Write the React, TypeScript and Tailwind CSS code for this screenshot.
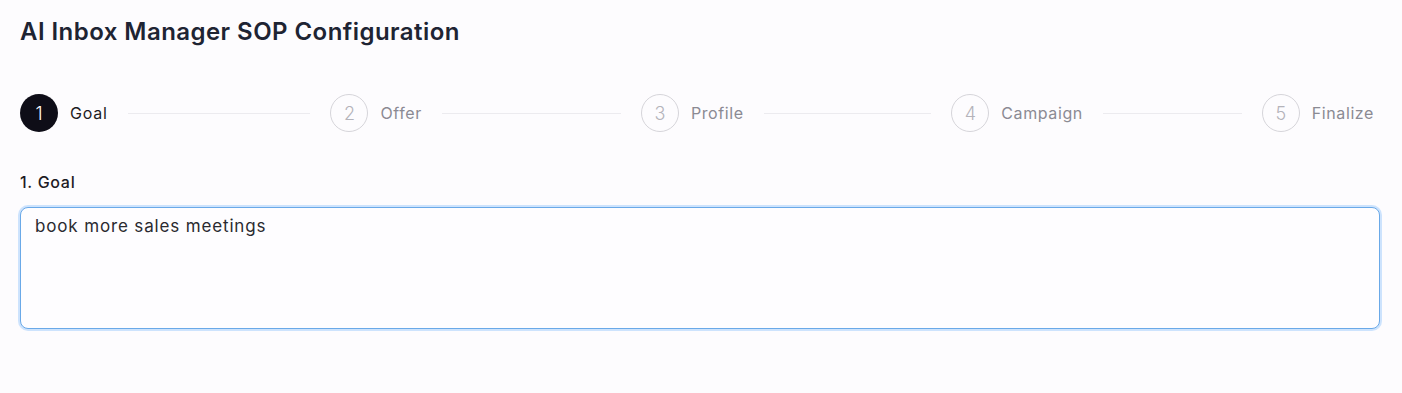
import React from "react";

const steps = ["Goal", "Offer", "Profile", "Campaign", "Finalize"];

export default function App() {
  const current = 0;

  return (
    <main
      className="min-h-screen bg-[#fdfcfe] pl-5 pr-[22px] pt-[17px] text-[#1c2230]"
      style={{ fontFamily: "Inter, 'Open Sans', sans-serif" }}
    >
      {/* Title */}
      <h1 className="text-[24px] font-semibold tracking-[0.45px] leading-[30px] text-[#1e2433]">
        AI Inbox Manager SOP Configuration
      </h1>

      {/* Stepper */}
      <div className="mt-[47px] flex items-center pr-[6px]">
        {steps.map((label, i) => {
          const last = i === steps.length - 1;
          return (
            <div key={label} className={last ? "flex shrink-0 items-center" : "flex flex-1 items-center"}>
              <div
                className={
                  i === current
                    ? "flex h-[38px] w-[38px] shrink-0 items-center justify-center rounded-full bg-[#0e0d17] text-[18px] font-light text-white"
                    : "flex h-[38px] w-[38px] shrink-0 items-center justify-center rounded-full border border-[#d6d5da] text-[18px] font-light text-[#b4b3ba]"
                }
              >
                {i + 1}
              </div>
              <span
                className={
                  i === current
                    ? "ml-3 text-[16px] tracking-[0.8px] text-[#1d1b24]"
                    : "ml-3 text-[16px] tracking-[0.6px] text-[#8b8a93]"
                }
              >
                {label}
              </span>
              {!last && <div className="mx-5 h-px flex-1 bg-[#ecebef]" />}
            </div>
          );
        })}
      </div>

      {/* Goal field */}
      <div className="mt-[39px]">
        <label htmlFor="goal" className="block text-[16px] font-medium tracking-[0.7px] text-[#1d1b24] leading-[22px]">
          1. Goal
        </label>
        <textarea
          id="goal"
          defaultValue="book more sales meetings"
          className="mt-[14px] block h-[122px] w-full resize-none rounded-lg border border-[#6aa9e8] bg-[#fefdff] px-[14px] py-[6px] text-[17px] tracking-[0.85px] text-[#2a2a30] shadow-[0_0_0_2px_rgba(147,197,253,0.45)] outline-none"
        />
      </div>
    </main>
  );
}
